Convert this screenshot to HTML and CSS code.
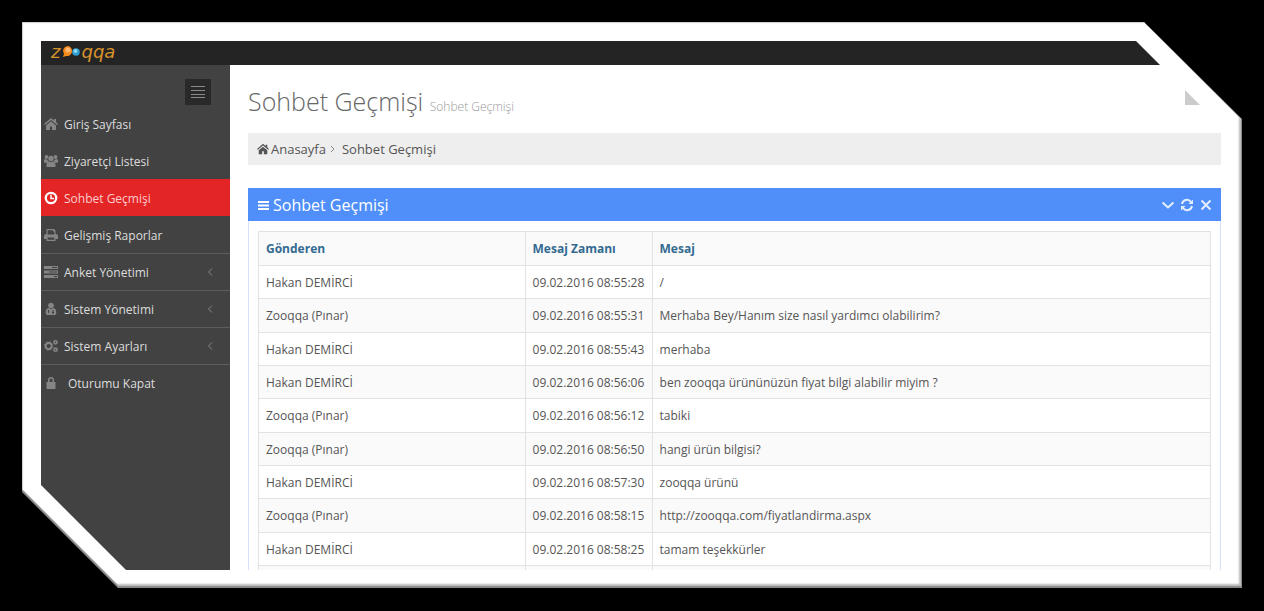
FILE: index.html
```html
<!DOCTYPE html>
<html lang="tr">
<head>
<meta charset="utf-8">
<title>Sohbet Geçmişi</title>
<link rel="stylesheet" href="styles.css">
</head>
<body>
<div class="bevel">
<div class="frame">
<div class="app">
  <header class="topbar">
    <a class="logo" href="#" aria-label="zooqqa"><span>z</span><svg class="logo-mark" width="22" height="14" viewBox="0 0 20 14"><circle cx="15" cy="7" r="3.800" fill="#2f9fd0"/><circle cx="14.500" cy="6" r="2" fill="#8fd8f0"/><path d="M7 1a5 5 0 1 1-2 10l-3 1 1-3A5 5 0 0 1 7 1z" fill="#f58a1c"/><circle cx="7" cy="5" r="2.500" fill="#ffb870"/></svg><span>qqa</span></a>
  </header>
  <div class="body">
    <aside class="sidebar">
      <button class="toggle" aria-label="Menü"><svg width="14" height="14" viewBox="0 0 14 14" stroke="#8a8a8a"><path d="M0 1.500h14M0 5.500h14M0 9.500h14M0 12.500h14"/></svg></button>
      <nav class="menu">
        <a class="item" href="#"><svg class="ico" viewBox="0 0 14 14"><path d="M7 1L0 7l1 1 6-5 6 5 1-1-2-2V2h-2v1.500zM2 8.500V13h4V9.500h2V13h4V8.500L7 4.300z"/></svg><span>Giriş Sayfası</span></a>
        <a class="item" href="#"><svg class="ico" viewBox="0 0 14 14"><circle cx="2.500" cy="3" r="1.900"/><circle cx="11.500" cy="3" r="1.900"/><circle cx="7" cy="4.500" r="2.700"/><path d="M0 8.500V6.500Q0 5.300 1 5l2.500.8.7 1.700-1 1.500zM14 8.500V6.500Q14 5.300 13 5l-2.500.8-.7 1.700 1 1.500zM2.500 13v-2.500Q2.500 7.700 4.500 7.300L7 8.300l2.500-1q2 .4 2 3.200V13z"/></svg><span>Ziyaretçi Listesi</span></a>
        <a class="item active" href="#"><svg class="ico" viewBox="0 0 14 14"><circle cx="7" cy="7" r="5.200" fill="none" stroke="#fff" stroke-width="2.300"/><path d="M7 3.800V7.500h3" fill="none" stroke="#fff" stroke-width="1.500"/></svg><span>Sohbet Geçmişi</span></a>
        <a class="item" href="#"><svg class="ico" viewBox="0 0 14 14"><path fill-rule="evenodd" d="M2.500 1H10l1.500 1.500V6Q14 6 14 8v3h-2.500v2h-9v-2H0V8Q0 6 2.500 6zM3.700 2.200V6.500h6.600V3.500H9V2.200zM3.700 9.500v2.300h6.600V9.500z"/></svg><span>Gelişmiş Raporlar</span></a>
        <a class="item ruled" href="#"><svg class="ico" viewBox="0 0 14 14"><path fill-rule="evenodd" d="M0 1h14v3H0zM8 2v1h5V2zM0 5.500h14v3H0zM5 6.500v1h8v-1zM0 10h14v3H0zM10 11v1h3v-1z"/></svg><span>Anket Yönetimi</span><svg class="arrow" viewBox="0 0 6 10"><path d="M5 1.500L1.500 5 5 8.500"/></svg></a>
        <a class="item ruled" href="#"><svg class="ico" viewBox="0 0 14 14"><circle cx="7" cy="3.500" r="2.800"/><path fill-rule="evenodd" d="M4.500 6l2.500 1 2.500-1q2.800.8 2.800 4.500 0 2.500-1.500 2.500H3.200q-1.500 0-1.500-2.500Q1.700 6.800 4.500 6zM4 8v3h1V8zm4.500 0v2H8v1.500h2V10h-.5V8z"/></svg><span>Sistem Yönetimi</span><svg class="arrow" viewBox="0 0 6 10"><path d="M5 1.500L1.500 5 5 8.500"/></svg></a>
        <a class="item ruled" href="#"><svg class="ico" viewBox="0 0 14 14"><g fill="none" stroke="#858585"><circle cx="4.700" cy="7" r="3" stroke-width="1.800"/><circle cx="4.700" cy="7" r="4.200" stroke-dasharray="1.600 1.700"/><circle cx="11.500" cy="3.300" r="1.600" stroke-width="1.600"/><circle cx="11.500" cy="10.700" r="1.600" stroke-width="1.600"/></g></svg><span>Sistem Ayarları</span><svg class="arrow" viewBox="0 0 6 10"><path d="M5 1.500L1.500 5 5 8.500"/></svg></a>
        <a class="item ruled" href="#"><svg class="ico" viewBox="0 0 14 14"><path fill-rule="evenodd" d="M2.500 6H4V4a3 3 0 0 1 6 0v2h1.500v7h-9zM5.500 6h3V4a1.500 1.500 0 0 0-3 0z"/></svg><span class="wide">Oturumu Kapat</span></a>
      </nav>
    </aside>
    <main class="content">
      <div class="heading">
        <h1>Sohbet Geçmişi <small>Sohbet Geçmişi</small></h1>
        <button class="corner" aria-label="Ayarlar"></button>
      </div>
      <nav class="crumbs">
        <svg width="12" height="12" viewBox="0 0 14 14" fill="#555"><path d="M7 1L0 7l1 1 6-5 6 5 1-1-2-2V2h-2v1.500zM2 8.500V13h4V9.500h2V13h4V8.500L7 4.300z"/></svg>
        <a href="#">Anasayfa</a>
        <svg class="sep" width="5" height="8" viewBox="0 0 5 8" fill="none" stroke="#888"><path d="M1 1l3 3-3 3"/></svg>
        <a href="#">Sohbet Geçmişi</a>
      </nav>
      <section class="panel">
        <div class="panel-head">
          <svg width="11" height="10" viewBox="0 0 11 10" stroke="#fff" stroke-width="2"><path d="M0 2h11M0 5.500h11M0 9h11"/></svg>
          <h2>Sohbet Geçmişi</h2>
          <div class="tools">
            <button aria-label="Daralt"><svg width="14" height="14" viewBox="0 0 14 14"><path d="M1.500 4.500L7 9.500l5.500-5"/></svg></button>
            <button aria-label="Yenile"><svg width="14" height="14" viewBox="0 0 14 14"><path d="M2 6a5 5 0 0 1 9-2M12 8a5 5 0 0 1-9 2"/><path class="solid" d="M13 1.500V6H8.500zM1 12.500V8h4.500z"/></svg></button>
            <button aria-label="Kapat"><svg width="14" height="14" viewBox="0 0 14 14"><path d="M2.500 2.500l9 9M11.500 2.500l-9 9"/></svg></button>
          </div>
        </div>
        <div class="panel-body">
          <table class="log">
            <colgroup><col class="c-from"><col class="c-time"><col></colgroup>
            <thead><tr><th>Gönderen</th><th>Mesaj Zamanı</th><th>Mesaj</th></tr></thead>
            <tbody>
              <tr><td>Hakan DEMİRCİ</td><td>09.02.2016 08:55:28</td><td>/</td></tr>
              <tr><td>Zooqqa (Pınar)</td><td>09.02.2016 08:55:31</td><td>Merhaba Bey/Hanım size nasıl yardımcı olabilirim?</td></tr>
              <tr><td>Hakan DEMİRCİ</td><td>09.02.2016 08:55:43</td><td>merhaba</td></tr>
              <tr><td>Hakan DEMİRCİ</td><td>09.02.2016 08:56:06</td><td>ben zooqqa ürününüzün fiyat bilgi alabilir miyim ?</td></tr>
              <tr><td>Zooqqa (Pınar)</td><td>09.02.2016 08:56:12</td><td>tabiki</td></tr>
              <tr><td>Zooqqa (Pınar)</td><td>09.02.2016 08:56:50</td><td>hangi ürün bilgisi?</td></tr>
              <tr><td>Hakan DEMİRCİ</td><td>09.02.2016 08:57:30</td><td>zooqqa ürünü</td></tr>
              <tr><td>Zooqqa (Pınar)</td><td>09.02.2016 08:58:15</td><td>http://zooqqa.com/fiyatlandirma.aspx</td></tr>
              <tr><td>Hakan DEMİRCİ</td><td>09.02.2016 08:58:25</td><td>tamam teşekkürler</td></tr>
              <tr><td></td><td></td><td></td></tr>
            </tbody>
          </table>
        </div>
      </section>
    </main>
  </div>
</div>
</div>
</div>
</body>
</html>
```
FILE: styles.css
```css
* { box-sizing: border-box; }
body {
  margin: 0;
  height: 100vh;
  padding: 22px 22px 23px;
  background: #000;
  font-family: "Open Sans", sans-serif;
  font-size: 12px;
  color: #555;
  overflow: hidden;
}
a { color: inherit; text-decoration: none; }
button { border: 0; padding: 0; background: none; }
svg { display: block; flex: none; }

.bevel {
  height: 100%;
  padding: 0 1px 2px 0;
  background: #8c8c8c;
  clip-path: polygon(0 0, calc(100% - 98px) 0, 100% 97px, 100% 100%, 96px 100%, 0 calc(100% - 96px));
}
.frame {
  height: 100%;
  padding: 19px 18px 16px 19px;
  background: #fff;
  box-shadow: inset 1px 1px 1px #ccc, inset -2px -2px 2px #bbb;
  clip-path: polygon(0 0, calc(100% - 97px) 0, 100% 97px, 100% 100%, 97px 100%, 0 calc(100% - 97px));
}
.app {
  height: 100%;
  display: flex;
  flex-direction: column;
  overflow: hidden;
  background: #fff;
  clip-path: polygon(0 0, calc(100% - 87px) 0, 100% 87px, 100% 100%, 85px 100%, 0 calc(100% - 85px));
}
.topbar { flex: none; height: 24px; background: #242424; }
.logo {
  display: flex;
  align-items: center;
  width: max-content;
  padding-left: 10px;
  line-height: 21px;
  font-family: "DejaVu Sans", sans-serif;
  font-size: 18px;
  font-style: italic;
  color: #d8922c;
}
.logo-mark { margin-right: -1px; }

.body { flex: 1; display: flex; min-height: 0; }
.sidebar { flex: none; width: 189px; background: #424242; }
.toggle {
  display: flex;
  align-items: center;
  justify-content: center;
  width: 26px;
  height: 26px;
  margin: 14px 19px 0 auto;
  background: #292929;
}
.item {
  display: flex;
  align-items: center;
  height: 37px;
  padding: 0 17px 0 3px;
  gap: 6px;
  font-size: 12px;
  color: #ddd;
  border-top: 1px solid transparent;
}
.ruled { border-top-color: #5c5c5c; }
.active { background: #e32526; border-top-color: #e32526; color: #fcc; }
.ico { width: 14px; height: 14px; fill: #858585; }
.active .ico { fill: #fff; }
.wide { padding-left: 4px; }
.arrow { width: 6px; height: 10px; margin-left: auto; fill: none; stroke: #858585; }

.content { flex: 1; min-width: 0; padding: 16px 2px 0 18px; }
.heading { display: flex; justify-content: space-between; height: 52px; }
h1 { margin: 0; font-size: 25px; font-weight: 300; line-height: 40px; color: #666; }
h1 small { font-size: 12px; color: #999; }
.corner { width: 36px; height: 24px; background: #ccc; }
.crumbs {
  display: flex;
  align-items: center;
  height: 32px;
  padding: 0 9px;
  gap: 2px;
  margin-bottom: 23px;
  background: #eee;
  font-size: 13px;
}
.sep { margin: 0 5px 0 2px; }
.panel { border: 1px solid #d5e3fa; border-top: 0; }
.panel-head {
  display: flex;
  align-items: center;
  gap: 4px;
  height: 33px;
  margin: 0 -1px;
  padding: 0 8px 0 10px;
  background: #508ffa;
  color: #fff;
}
h2 { margin: 0; font-size: 16px; font-weight: 400; }
.tools { display: flex; gap: 5px; margin-left: auto; }
.tools svg { fill: none; stroke: #e4eeff; stroke-width: 2px; }
.tools .solid { fill: #e4eeff; stroke: none; }
.panel-body { padding: 10px 9px; }
.log {
  width: 100%;
  table-layout: fixed;
  border-collapse: collapse;
  border: 1px solid #e2e2e2;
}
.c-from { width: 28%; }
.c-time { width: 127px; }
.log th, .log td {
  height: 33px;
  padding: 0 7px;
  border: 1px solid #e2e2e2;
  text-align: left;
  white-space: nowrap;
}
.log th { height: 34px; color: #336a91; background: #fafafa; }
.log tr:nth-child(3n + 2) td { height: 34px; }
.log tbody tr:nth-child(even) { background: #fafafa; }
```
